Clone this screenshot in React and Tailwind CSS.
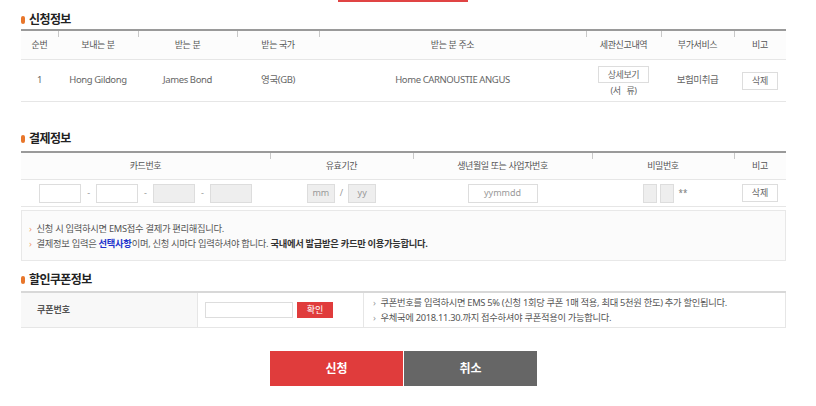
import React from "react";

const font = { fontFamily: '"Noto Sans", "Noto Sans CJK KR", sans-serif' };

function Title({ children }) {
  return (
    <div className="flex items-center h-[19px] gap-[4px]">
      <span className="w-[4px] h-[8px] rounded-[2px] bg-[#e8762b]" />
      <span className="text-[12px] font-bold text-[#222] tracking-[-0.6px] leading-none">{children}</span>
    </div>
  );
}

function HCell({ children, tick }) {
  return (
    <div className="relative flex items-center justify-center text-[9px] text-[#555] tracking-[-0.4px]">
      {tick && <span className="absolute left-0 top-0 w-px h-[6px] bg-[#c8c8c8]" />}
      {children}
    </div>
  );
}

function Box({ w, gray, children }) {
  return (
    <div
      className={
        "h-[19px] border border-[#ddd] flex items-center justify-center text-[9px] text-[#999] " +
        (gray ? "bg-[#eeeeee] " : "bg-white ") +
        w
      }
    >
      {children}
    </div>
  );
}

export default function App() {
  return (
    <div className="w-[816px] h-[406px] bg-white overflow-hidden" style={font}>
      <div className="ml-[338px] w-[130px] h-[2px] bg-[#e04444]" />
      <div className="px-[21px] w-[807px]">
        {/* 신청정보 */}
        <div className="mt-[8px]">
          <Title>신청정보</Title>
        </div>
        <div className="border-t-2 border-[#9a9a9a]">
          <div className="grid grid-cols-[37px_80px_99px_82px_267px_75px_73px_52px] h-[29px] bg-[#fcfcfc] border-b border-[#e6e6e6]">
            <HCell>순번</HCell>
            <HCell tick>보내는 분</HCell>
            <HCell tick>받는 분</HCell>
            <HCell tick>받는 국가</HCell>
            <HCell tick>받는 분 주소</HCell>
            <HCell tick>세관신고내역</HCell>
            <HCell tick>부가서비스</HCell>
            <HCell tick>비고</HCell>
          </div>
          <div className="grid grid-cols-[37px_80px_99px_82px_267px_75px_73px_52px] h-[42px] border-b border-[#e6e6e6] text-[9.5px] text-[#666] tracking-[-0.4px]">
            <div className="flex items-center justify-center">1</div>
            <div className="flex items-center justify-center">Hong Gildong</div>
            <div className="flex items-center justify-center">James Bond</div>
            <div className="flex items-center justify-center">영국(GB)</div>
            <div className="flex items-center justify-center">Home CARNOUSTIE ANGUS</div>
            <div className="flex flex-col items-center justify-center gap-[3px]">
              <div className="w-[51px] h-[17px] border border-[#ddd] flex items-center justify-center text-[9px]">상세보기</div>
              <div className="text-[9px] leading-none">(서&nbsp;&nbsp;&nbsp;류)</div>
            </div>
            <div className="flex items-center justify-center">보험미취급</div>
            <div className="flex items-center justify-center">
              <div className="w-[36px] h-[18px] border border-[#ddd] flex items-center justify-center text-[9px]">삭제</div>
            </div>
          </div>
        </div>

        {/* 결제정보 */}
        <div className="mt-[27px]">
          <Title>결제정보</Title>
        </div>
        <div className="mt-[3px] border-t-2 border-[#9a9a9a]">
          <div className="grid grid-cols-[249px_143px_179px_142px_52px] h-[27px] bg-[#fcfcfc] border-b border-[#e6e6e6]">
            <HCell>카드번호</HCell>
            <HCell tick>유효기간</HCell>
            <HCell tick>생년월일 또는 사업자번호</HCell>
            <HCell tick>비밀번호</HCell>
            <HCell tick>비고</HCell>
          </div>
          <div className="grid grid-cols-[249px_143px_179px_142px_52px] h-[27px] border-b border-[#e6e6e6] text-[9px] text-[#999]">
            <div className="flex items-center justify-center gap-[6px]">
              <Box w="w-[42px]" />
              <span>-</span>
              <Box w="w-[42px]" />
              <span>-</span>
              <Box w="w-[42px]" gray />
              <span>-</span>
              <Box w="w-[42px]" gray />
            </div>
            <div className="flex items-center justify-center gap-[5px]">
              <Box w="w-[28px]" gray>mm</Box>
              <span>/</span>
              <Box w="w-[28px]" gray>yy</Box>
            </div>
            <div className="flex items-center justify-center">
              <Box w="w-[70px]">yymmdd</Box>
            </div>
            <div className="flex items-center justify-center gap-[3px] pl-[4px]">
              <Box w="w-[14px]" gray />
              <Box w="w-[14px]" gray />
              <span className="ml-[2px] text-[#777] text-[8px]">**</span>
            </div>
            <div className="flex items-center justify-center">
              <div className="w-[36px] h-[18px] border border-[#ddd] flex items-center justify-center text-[9px] text-[#666]">삭제</div>
            </div>
          </div>
        </div>

        <div className="mt-[3px] h-[51px] border border-[#e8e8e8] bg-[#fbfbfb] flex flex-col justify-center gap-[5px] pl-[7px] pt-[1px] text-[9.3px] text-[#555] tracking-[-0.3px]">
          <div className="flex items-center gap-[5px] leading-none">
            <span className="text-[#f0a070]">›</span>
            <span>신청 시 입력하시면 EMS접수 결제가 편리해집니다.</span>
          </div>
          <div className="flex items-center gap-[5px] leading-none">
            <span className="text-[#f0a070]">›</span>
            <span>
              결제정보 입력은 <span className="text-[#2233cc] font-bold">선택사항</span>이며, 신청 시마다 입력하셔야 합니다.{" "}
              <span className="font-bold text-[#333]">국내에서 발급받은 카드만 이용가능합니다.</span>
            </span>
          </div>
        </div>

        {/* 할인쿠폰정보 */}
        <div className="mt-[9px]">
          <Title>할인쿠폰정보</Title>
        </div>
        <div className="mt-[2px] h-[37px] border-t-2 border-b border-[#d8d8d8] border-b-[#e6e6e6] flex">
          <div className="w-[176px] bg-[#f8f8f8] flex items-center pl-[16px] text-[9px] font-bold text-[#555]">쿠폰번호</div>
          <div className="w-[166px] border-l border-[#e6e6e6] flex items-center pl-[7px] gap-[4px]">
            <div className="w-[88px] h-[16px] border border-[#ddd] bg-white" />
            <div className="w-[36px] h-[16px] bg-[#e03c3c] flex items-center justify-center text-[9px] text-white">확인</div>
          </div>
          <div className="flex-1 border-l border-r border-[#e6e6e6] flex flex-col justify-center gap-[6px] pl-[9px] text-[9.3px] text-[#555] tracking-[-0.3px]">
            <div className="flex items-center gap-[5px] leading-none">
              <span className="text-[#999]">›</span>
              <span>쿠폰번호를 입력하시면 EMS 5% (신청 1회당 쿠폰 1매 적용, 최대 5천원 한도) 추가 할인됩니다.</span>
            </div>
            <div className="flex items-center gap-[5px] leading-none">
              <span className="text-[#999]">›</span>
              <span>우체국에 2018.11.30.까지 접수하셔야 쿠폰적용이 가능합니다.</span>
            </div>
          </div>
        </div>

        <div className="mt-[23px] flex justify-center gap-[1px]">
          <div className="w-[133px] h-[35px] bg-[#e03c3c] flex items-center justify-center text-[12px] font-bold text-white">신청</div>
          <div className="w-[133px] h-[35px] bg-[#666666] flex items-center justify-center text-[12px] font-bold text-white">취소</div>
        </div>
      </div>
    </div>
  );
}
